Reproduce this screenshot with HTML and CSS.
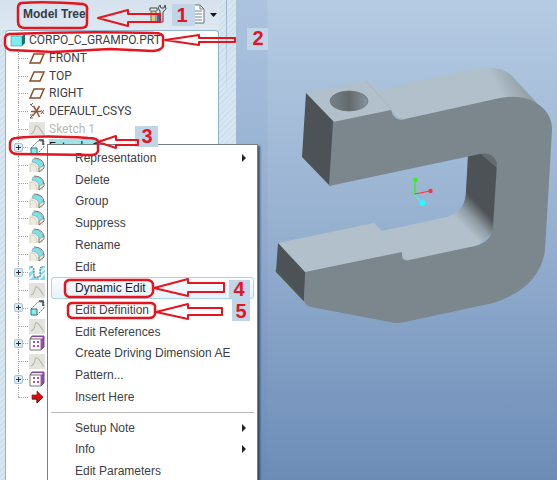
FILE: index.html
```html
<!DOCTYPE html>
<html lang="en">
<head>
  <meta charset="UTF-8" />
  <meta name="viewport" content="width=device-width, initial-scale=1.0"/>
  <title>Model Tree</title>
  <link rel="stylesheet" href="styles.css">
</head>
<body>

  <!-- icon set -->
  <svg class="defs" width="0" height="0">
    <symbol id="part" viewBox="0 0 16 16">
      <path d="M1 4l3-2h11l-3 2z" fill="#c9ffff"/>
      <path d="M1 4h11v10H1z" fill="#7deeee" stroke="#55999d" stroke-width=".7"/>
      <path d="M12 4l3-2v9l-3 3z" fill="#167477"/>
    </symbol>
    <symbol id="plane" viewBox="0 0 16 16">
      <path d="M5 4h10l-4 9H1z" fill="none" stroke="#8c4b22" stroke-width="1.5"/>
    </symbol>
    <symbol id="csys" viewBox="0 0 16 16">
      <path d="M2 8.500h10M7.500 8L4.500 3M7.500 8l3-5M7.500 8l-4 5M7.500 8l3 6" fill="none" stroke="#96532f" stroke-width="1.500"/>
      <path d="M1 1l3 3M4 0L2 2M12 7l3 4M15 7l-3 4M1 12h3l-3 3h3" fill="none" stroke="#665a54" stroke-width=".9"/>
    </symbol>
    <symbol id="sketch" viewBox="0 0 16 16">
      <path d="M0 1h16v15H0z" fill="#e4e4df"/>
      <path d="M2 13Q5 12 6 7t5 1 4 5" fill="none" stroke="#b5b5a9" stroke-width="1.200"/>
    </symbol>
    <symbol id="extrude" viewBox="0 0 16 16">
      <path d="M2 9l7-7h6v6l-7 7z" fill="#f6f6f4" stroke="#777" stroke-dasharray="2 1"/>
      <path d="M2 9h6v6H2z" fill="#83eeee" stroke="#387577"/>
      <path d="M10 1h4v5" fill="none" stroke="#2c4a4c" stroke-width="1.500"/>
    </symbol>
    <symbol id="round" viewBox="0 0 16 16">
      <path d="M0 6l5-2 9 5v6H1z" fill="#efecdf"/>
      <path d="M1 7v8M2 7q6 0 6 8" fill="none" stroke="#d5d2c5"/>
      <path d="M4 2q9-1 10 7l-4 2Q10 6 3 5z" fill="#78e4ed" stroke="#7b9ea3" stroke-width=".6"/>
      <path d="M5 1q9 0 10 8M10 11v4l5-4V8" fill="none" stroke="#77766e"/>
    </symbol>
    <symbol id="hole" viewBox="0 0 16 16">
      <path d="M0 2h16v14H0z" fill="#7edfe8"/>
      <path d="M0 8l6-6M0 15l5-5M10 15l6-6M12 8l4-4" stroke="#e6ffff" stroke-width="2"/>
      <path d="M3 2v2l2 1v8h6V5l2-1V2z" fill="#fff"/>
      <path d="M2 3h2l1 2v8h6V5l1-2h2" fill="none" stroke="#555" stroke-dasharray="2 1"/>
    </symbol>
    <symbol id="pattern" viewBox="0 0 16 16">
      <path d="M1 4l2-3h12v11l-3 3z" fill="#9944bd" stroke="#6f5378"/>
      <path d="M2 4l1-2h11l-2 2z" fill="#eee"/>
      <path d="M1 4h11v11H1z" fill="#fff" stroke="#777"/>
      <path d="M4 6h2v2H4zM8 6h2v2H8zM4 10h2v2H4zM8 10h2v2H8z" fill="#a54bd0"/>
    </symbol>
    <symbol id="insert" viewBox="0 0 16 16">
      <path d="M3 6h5V2l6 6-6 6v-4H3z" fill="#e20808" stroke="#941919" stroke-width=".7"/>
      <path d="M3 10h5v4l6-6" fill="none" stroke="#681111"/>
    </symbol>
  </svg>

  <main class="app">
    <aside class="panel">
      <header class="panel-head">
        <h1>Model Tree</h1>
        <div class="tools">
          <button aria-label="Tree settings" class="tool">
            <svg width="18" height="20" viewBox="0 0 18 20">
              <path d="M1 7V4h7v3" fill="#eee" stroke="#444"/>
              <path d="M2 7h5v11H2z" fill="#e8c780" stroke="#6b665c"/>
              <path d="M11 18V7l-2-3 2-3 1 3h3l1-3 1 4-3 3v10z" fill="#d8dbe0" stroke="#3c464e"/>
              <path d="M8 11h4v7H8z" fill="#2774b8"/>
            </svg>
          </button>
          <button aria-label="Tree display" class="tool">
            <svg width="28" height="20" viewBox="0 0 28 20">
              <path d="M1 1h8l4 4v14H1z" fill="#fff" stroke="#68717b"/>
              <path d="M3 7h8M3 10h8M3 13h8M3 16h8M9 1v4h4" fill="none" stroke="#75818e"/>
              <path d="M19 9h7l-3.500 4z" fill="#111"/>
            </svg>
          </button>
        </div>
      </header>
      <ul class="tree">
        <li class="root"><svg class="icon"><use href="#part"/></svg><span>CORPO_C_GRAMPO.PRT</span></li>
        <li><svg class="icon"><use href="#plane"/></svg><span>FRONT</span></li>
        <li><svg class="icon"><use href="#plane"/></svg><span>TOP</span></li>
        <li><svg class="icon"><use href="#plane"/></svg><span>RIGHT</span></li>
        <li><svg class="icon"><use href="#csys"/></svg><span>DEFAULT_CSYS</span></li>
        <li class="hidden-item"><svg class="icon"><use href="#sketch"/></svg><span>Sketch 1</span></li>
        <li class="selected"><button class="expand" aria-label="Expand"></button><svg class="icon"><use href="#extrude"/></svg><span>Extrude 1</span></li>
        <li><svg class="icon"><use href="#round"/></svg></li>
        <li><svg class="icon"><use href="#round"/></svg></li>
        <li><svg class="icon"><use href="#round"/></svg></li>
        <li><svg class="icon"><use href="#round"/></svg></li>
        <li><svg class="icon"><use href="#round"/></svg></li>
        <li><svg class="icon"><use href="#round"/></svg></li>
        <li><button class="expand" aria-label="Expand"></button><svg class="icon"><use href="#hole"/></svg></li>
        <li><svg class="icon"><use href="#sketch"/></svg></li>
        <li><button class="expand" aria-label="Expand"></button><svg class="icon"><use href="#extrude"/></svg></li>
        <li><svg class="icon"><use href="#sketch"/></svg></li>
        <li><button class="expand" aria-label="Expand"></button><svg class="icon"><use href="#pattern"/></svg></li>
        <li><svg class="icon"><use href="#sketch"/></svg></li>
        <li><button class="expand" aria-label="Expand"></button><svg class="icon"><use href="#pattern"/></svg></li>
        <li><svg class="icon"><use href="#insert"/></svg></li>
      </ul>
    </aside>

    <section class="viewport">
      <svg class="model" width="321" height="480" viewBox="236 0 321 480">
        <defs>
          <linearGradient id="holeShade"><stop offset="0" stop-color="#798288"/><stop offset=".5" stop-color="#626a6e"/><stop offset="1" stop-color="#88949b"/></linearGradient>
          <linearGradient id="outer" gradientUnits="userSpaceOnUse" x1="497" y1="87" x2="522" y2="74"><stop offset="0" stop-color="#b1c0ca"/><stop offset="1" stop-color="#8f9ba2"/></linearGradient>
          <linearGradient id="fillet" gradientUnits="userSpaceOnUse" x1="466" y1="229" x2="485" y2="211"><stop offset="0" stop-color="#b1c0ca"/><stop offset=".45" stop-color="#929ea6"/><stop offset="1" stop-color="#4c5255"/></linearGradient>
        </defs>
        <!-- top faces -->
        <path d="M306 93L366 81L379 90L475 69Q498 64 511 75L537 103L530 112L500 101L402 122L392 113L333 124z" fill="url(#outer)"/>
        <path d="M366 81L392 110" stroke="#a8b7c2"/>
        <!-- inside of the jaw -->
        <path d="M468 154L499 152L496 230L475 248L407 264L401 254L305 275L278 243L374 223L382 231L447 217Q466 211 466 190z" fill="url(#fillet)"/>
        <path d="M480 153L499 151L498 169z" fill="#646c70"/>
        <!-- end faces -->
        <path d="M306 93L334 122L330 186L302 157z" fill="#4c5255"/>
        <path d="M278 243L306 273L304 301L276 272z" fill="#4c5255"/>
        <path d="M276 270L304 300" stroke="#4d5a51" stroke-width="2"/>
        <!-- front face -->
        <path d="M333 122L391 110L393 115Q397 121 405 119L500 98Q523 94 536 103Q552 112 552 130L545 250Q540 288 493 303L405 322Q396 324 390 322L311 307Q306 306 304 301L305 272L402 252L402 258Q404 261 409 260L475 246Q492 242 493 226L497 163Q493 151 480 154L329 186z" fill="#7c868d"/>
        <path d="M393 112Q396 120 402 119" fill="none" stroke="#a2afb8"/>
        <path d="M403 253V257Q404 260 408 260" fill="none" stroke="#a8b6c0"/>
        <ellipse cx="349" cy="101" rx="19" ry="10" fill="url(#holeShade)" stroke="#626a6e" stroke-width=".6"/>
        <!-- spin centre -->
        <path d="M415 180v15" stroke="#39f01c" stroke-width="1.500"/>
        <path d="M415 194l15-3" stroke="#f33"/>
        <path d="M415 195l7 8" stroke="#4ff"/>
        <circle cx="415.500" cy="180" r="2.300" fill="#39f01c"/>
        <circle cx="430.500" cy="191" r="2.200" fill="#f33"/>
        <circle cx="422.500" cy="203" r="3" fill="#2ff"/>
      </svg>
    </section>

    <menu class="context-menu">
      <li><button class="more">Representation</button></li>
      <li><button>Delete</button></li>
      <li><button>Group</button></li>
      <li><button>Suppress</button></li>
      <li><button>Rename</button></li>
      <li><button>Edit</button></li>
      <li><button class="active">Dynamic Edit</button></li>
      <li><button>Edit Definition</button></li>
      <li><button>Edit References</button></li>
      <li><button>Create Driving Dimension AE</button></li>
      <li><button>Pattern...</button></li>
      <li><button>Insert Here</button></li>
      <li class="separator" role="separator"></li>
      <li><button class="more">Setup Note</button></li>
      <li><button class="more">Info</button></li>
      <li><button>Edit Parameters</button></li>
    </menu>

    <!-- step callouts -->
    <svg class="callouts" width="280" height="330" viewBox="0 0 280 330">
      <g fill="#c1d5e9">
        <path d="M172 4h23v22h-23zM247 28h21v22h-21zM135 126h23v21h-23zM229 280h21v18h-21zM232 298h18v23h-18z"/>
      </g>
      <g fill="none" stroke="#e6141e" stroke-width="2.500" stroke-linejoin="round">
        <path d="M21 3Q45 1 83 4Q88 5 87 10V23Q87 28 81 28L25 28Q18 28 18 22V8Q18 4 21 3z"/>
        <path d="M9 34Q80 31 154 33Q164 33 163 38V46Q162 50 153 51L110 49L53 52L10 50Q5 48 5 44V39Q5 35 9 34z"/>
        <path d="M16 138Q45 135 88 138Q98 138 98 142V151Q97 155 91 155L18 154Q11 154 10 149V143Q11 138 16 138z"/>
        <path d="M69 280H148Q153 281 153 285V292Q152 296 147 297H69Q65 296 65 292V284Q65 281 69 280z"/>
        <path d="M72 303H151Q156 304 155 308V314Q154 318 149 318H72Q68 317 68 314V306Q69 303 72 303z"/>
      </g>
      <g fill="none" stroke="#e6141e" stroke-width="2" stroke-linejoin="round">
        <path d="M98 18L128 10V14H160V22H128V26z"/>
        <path d="M165 40L199 35V38H235V42H199V45z"/>
        <path d="M98 142L116 136V140H138V145H116V148z"/>
        <path d="M154 288L188 279V283H224V292H188V296z"/>
        <path d="M156 312L188 304V308H222V315H188V319z"/>
      </g>
      <g class="step">
        <text x="182" y="22">1</text>
        <text x="258" y="45">2</text>
        <text x="147" y="143">3</text>
        <text x="239" y="296">4</text>
        <text x="241" y="318">5</text>
      </g>
    </svg>
  </main>
</body>
</html>
```
FILE: styles.css
```css
* {
  box-sizing: border-box;
}

body {
  margin: 0;
  font-family: "Liberation Sans", Arial, sans-serif;
  font-size: 12px;
  color: #3b4048;
}

.defs {
  position: absolute;
}

.app {
  position: relative;
  display: flex;
  height: 100vh;
  overflow: hidden;
}

button {
  font: inherit;
  color: inherit;
  border: 0;
  padding: 0;
  background: none;
}

/* left panel */
.panel {
  flex: 0 0 236px;
  display: flex;
  flex-direction: column;
  padding-left: 5px;
  padding-right: 17px;
  background: linear-gradient(#8fb0c8, transparent) 226px 0 / 1px 100px no-repeat,
    repeating-linear-gradient(135deg, #cfe0ec 0 2px, #d9e7f1 2px 4px);
}

.panel-head {
  display: flex;
  align-items: center;
  justify-content: space-between;
  height: 30px;
  margin-left: -5px;
  padding-left: 23px;
  padding-bottom: 3px;
  background: linear-gradient(#d5e2ed, #dde8f1);
}

.panel-head h1 {
  margin: 0;
  font-size: 12px;
  color: #333c4a;
}

.tools {
  display: flex;
  gap: 24px;
}

.tool {
  display: flex;
}

.tree {
  flex: 1;
  display: grid;
  grid-template-rows: repeat(21, 1fr);
  align-content: start;
  margin: 0;
  padding: 0 0 74px;
  list-style: none;
  background: #fff;
  border: 1px solid #8fb5ce;
  border-bottom: 0;
  border-radius: 4px 4px 0 0;
  font-family: Roboto, "Open Sans", sans-serif;
}

.tree li {
  position: relative;
  display: flex;
  align-items: center;
  gap: 4px;
  min-height: 0;
  padding-left: 23px;
  line-height: 16px;
  white-space: nowrap;
}

.tree li.root {
  gap: 3px;
  padding-left: 4px;
}

/* dotted connectors */
.tree li:not(.root)::before {
  content: "";
  position: absolute;
  left: 12px;
  top: 0;
  height: 100%;
  border-left: 1px dotted #a5a5a5;
}

.tree li:last-child::before {
  height: 50%;
}

.tree li:not(.root)::after {
  content: "";
  position: absolute;
  left: 12px;
  top: 50%;
  width: 10px;
  border-top: 1px dotted #a5a5a5;
}

.icon {
  flex: none;
  width: 16px;
  height: 16px;
}

.expand {
  position: absolute;
  z-index: 1;
  left: 8px;
  width: 9px;
  height: 9px;
  border: 1px solid #a5c5d8;
  border-radius: 2px;
  background: linear-gradient(#333, #333) center / 5px 1px no-repeat,
    linear-gradient(#333, #333) center / 1px 5px no-repeat, #dcecf6;
}

.hidden-item {
  color: #b8b8b8;
}

.selected span {
  padding-right: 2px;
  color: #111;
  background: #9fe4e8;
}

/* graphics area */
.viewport {
  flex: 1;
  overflow: hidden;
  background: linear-gradient(90deg, rgba(90, 130, 180, 0.1) 31px, transparent 32px),
    linear-gradient(#b5cbe3, #98b2d1 45%, #6c8cb7);
}

.model {
  display: block;
}

/* right-click menu */
.context-menu {
  position: absolute;
  left: 47px;
  top: 144px;
  width: 211px;
  height: 341px;
  display: grid;
  grid-template-rows: repeat(12, 1fr) 9px repeat(3, 1fr);
  margin: 0;
  padding: 2px 3px;
  list-style: none;
  background: #fff;
  border: 1px solid #777f86;
  box-shadow: 2px 2px 2px rgba(30, 45, 70, 0.7);
}

.context-menu li {
  display: flex;
  min-height: 0;
}

.context-menu button {
  position: relative;
  flex: 1;
  padding-left: 24px;
  text-align: left;
  white-space: nowrap;
}

.context-menu .active {
  color: #111c38;
  border: 1px solid #add3e6;
  border-radius: 3px;
  padding-left: 23px;
  background: linear-gradient(#fafdff, #e8f3fa);
}

.more::after {
  content: "";
  position: absolute;
  right: 8px;
  top: 50%;
  margin-top: -4px;
  border: 4px solid transparent;
  border-left-color: #222;
  border-right: 0;
}

.context-menu .separator {
  align-self: center;
  height: 1px;
  background: #bcbcbc;
}

/* callouts */
.callouts {
  position: absolute;
  left: 0;
  top: 0;
  pointer-events: none;
}

.step {
  fill: #e6141e;
  font-size: 20px;
  font-weight: bold;
  text-anchor: middle;
}
```
